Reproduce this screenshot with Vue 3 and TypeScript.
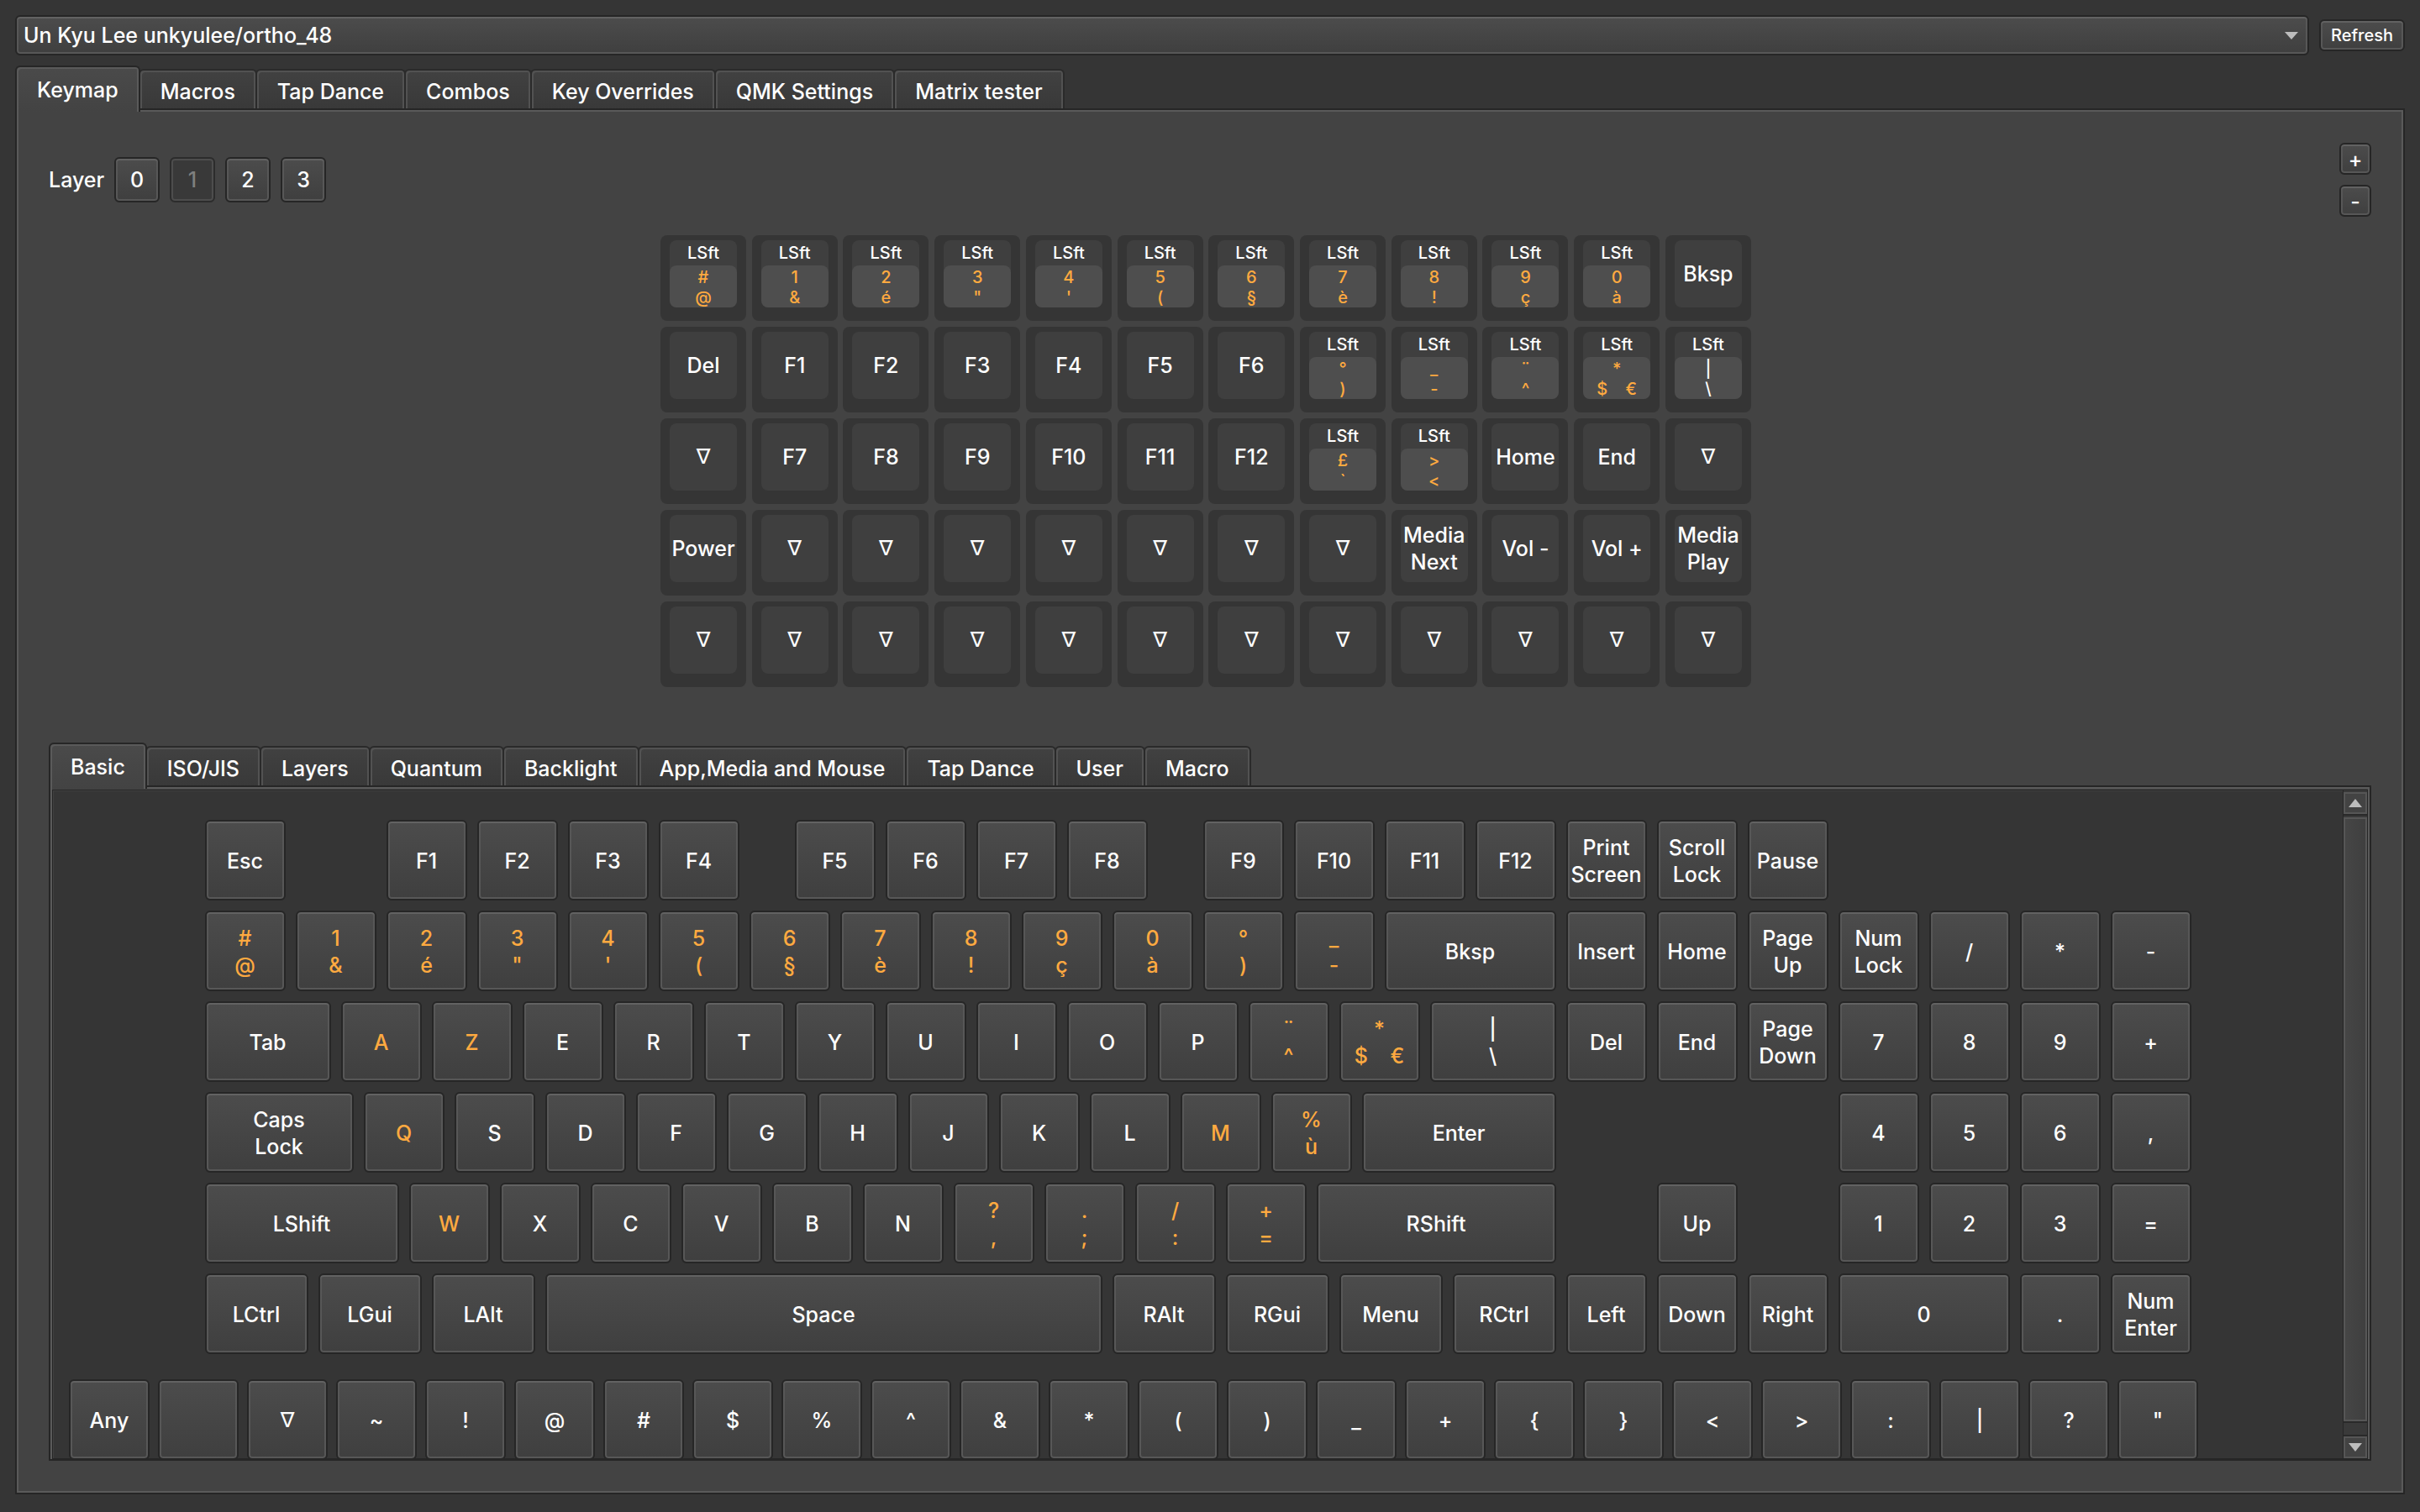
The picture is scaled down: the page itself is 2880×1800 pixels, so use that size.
<script setup lang="ts">
import { ref } from 'vue'

interface BoardKey {
  label: string
  mod?: string
  remapped?: boolean
}

interface PickerKey {
  label: string
  start: number
  span: number
  row: number
  remapped: boolean
}

type Entry = string | { gap: number } | { label: string; w: number }

const devices = ['Un Kyu Lee unkyulee/ortho_48']
const device = ref(devices[0])

const mainTabs = ['Keymap', 'Macros', 'Tap Dance', 'Combos', 'Key Overrides', 'QMK Settings', 'Matrix tester']
const mainTab = ref('Keymap')

const pickerTabs = ['Basic', 'ISO/JIS', 'Layers', 'Quantum', 'Backlight', 'App,Media and Mouse', 'Tap Dance', 'User', 'Macro']
const pickerTab = ref('Basic')

const layers = [0, 1, 2, 3]
const layer = ref(1)

const TRANSPARENT = '∇'

const plain = (...labels: string[]): BoardKey[] => labels.map((label) => ({ label }))
const shifted = (...labels: string[]): BoardKey[] =>
  labels.map((label) => ({ label, mod: 'LSft', remapped: label !== '|\n\\' }))

const board: BoardKey[][] = [
  [...shifted('#\n@', '1\n&', '2\né', '3\n"', "4\n'", '5\n(', '6\n§', '7\nè', '8\n!', '9\nç', '0\nà'), ...plain('Bksp')],
  [...plain('Del', 'F1', 'F2', 'F3', 'F4', 'F5', 'F6'), ...shifted('°\n)', '_\n-', '¨\n^', '*\n$    €', '|\n\\')],
  [...plain(TRANSPARENT, 'F7', 'F8', 'F9', 'F10', 'F11', 'F12'), ...shifted('£\n`', '>\n<'), ...plain('Home', 'End', TRANSPARENT)],
  plain('Power', ...Array<string>(7).fill(TRANSPARENT), 'Media\nNext', 'Vol -', 'Vol +', 'Media\nPlay'),
  plain(...Array<string>(12).fill(TRANSPARENT)),
]

const gap = (size: number): Entry => ({ gap: size })
const wide = (label: string, w: number): Entry => ({ label, w })

/* A leading "~" marks a key whose legend differs on the host layout. */
const pickerRows: Entry[][] = [
  ['Esc', gap(1), 'F1', 'F2', 'F3', 'F4', gap(0.5), 'F5', 'F6', 'F7', 'F8', gap(0.5), 'F9', 'F10', 'F11', 'F12',
    'Print\nScreen', 'Scroll\nLock', 'Pause'],
  ['~#\n@', '~1\n&', '~2\né', '~3\n"', "~4\n'", '~5\n(', '~6\n§', '~7\nè', '~8\n!', '~9\nç', '~0\nà', '~°\n)', '~_\n-',
    wide('Bksp', 2), 'Insert', 'Home', 'Page\nUp', 'Num\nLock', '/', '*', '-'],
  [wide('Tab', 1.5), '~A', '~Z', 'E', 'R', 'T', 'Y', 'U', 'I', 'O', 'P', '~¨\n^', '~*\n$    €', wide('|\n\\', 1.5),
    'Del', 'End', 'Page\nDown', '7', '8', '9', '+'],
  [wide('Caps\nLock', 1.75), '~Q', 'S', 'D', 'F', 'G', 'H', 'J', 'K', 'L', '~M', '~%\nù', wide('Enter', 2.25),
    gap(3), '4', '5', '6', ','],
  [wide('LShift', 2.25), '~W', 'X', 'C', 'V', 'B', 'N', '~?\n,', '~.\n;', '~/\n:', '~+\n=', wide('RShift', 2.75),
    gap(1), 'Up', gap(1), '1', '2', '3', '='],
  [wide('LCtrl', 1.25), wide('LGui', 1.25), wide('LAlt', 1.25), wide('Space', 6.25), wide('RAlt', 1.25), wide('RGui', 1.25),
    wide('Menu', 1.25), wide('RCtrl', 1.25), 'Left', 'Down', 'Right', wide('0', 2), '.', 'Num\nEnter'],
]

const pickerKeys: PickerKey[] = pickerRows.flatMap((entries, row) => {
  let x = 0
  const keys: PickerKey[] = []
  for (const entry of entries) {
    if (typeof entry !== 'string' && 'gap' in entry) {
      x += entry.gap
      continue
    }
    const raw = typeof entry === 'string' ? entry : entry.label
    const w = typeof entry === 'string' ? 1 : entry.w
    const remapped = raw.startsWith('~')
    keys.push({ label: remapped ? raw.slice(1) : raw, start: x * 4 + 1, span: w * 4, row: row + 1, remapped })
    x += w
  }
  return keys
})

const symbols = ['Any', '', TRANSPARENT, '~', '!', '@', '#', '$', '%', '^', '&', '*', '(', ')', '_', '+', '{', '}', '<', '>', ':', '|', '?', '"']
</script>

<template>
  <main class="app">
    <header class="device-bar">
      <div class="combo">
        <select v-model="device" class="raised combo-select" aria-label="Device">
          <option v-for="d in devices" :key="d" :value="d">{{ d }}</option>
        </select>
        <svg class="combo-arrow" viewBox="0 0 16 9" aria-hidden="true"><path d="M0 0h16L8 9z" /></svg>
      </div>
      <button type="button" class="raised refresh">Refresh</button>
    </header>

    <nav class="tabs" role="tablist">
      <button
        v-for="t in mainTabs"
        :key="t"
        type="button"
        role="tab"
        class="tab"
        :class="{ active: t === mainTab }"
        :aria-selected="t === mainTab"
        @click="mainTab = t"
      >{{ t }}</button>
    </nav>

    <section class="pane">
      <div class="toolbar">
        <div class="layers">
          <span class="layers-label">Layer</span>
          <button
            v-for="n in layers"
            :key="n"
            type="button"
            class="raised layer"
            :disabled="n === layer"
            @click="layer = n"
          >{{ n }}</button>
        </div>
        <div class="zoom">
          <button type="button" class="raised zoom-button">+</button>
          <button type="button" class="raised zoom-button">-</button>
        </div>
      </div>

      <div class="board-holder">
        <div class="board">
          <div v-for="(row, r) in board" :key="r" class="board-row">
            <button v-for="(key, c) in row" :key="c" type="button" class="cap">
              <span v-if="key.mod" class="face split">
                <span class="mod">{{ key.mod }}</span>
                <span class="inner" :class="{ remapped: key.remapped }">{{ key.label }}</span>
              </span>
              <span v-else class="face" :class="{ nabla: key.label === TRANSPARENT }">{{ key.label }}</span>
            </button>
          </div>
        </div>
      </div>

      <nav class="tabs" role="tablist">
        <button
          v-for="t in pickerTabs"
          :key="t"
          type="button"
          role="tab"
          class="tab"
          :class="{ active: t === pickerTab }"
          :aria-selected="t === pickerTab"
          @click="pickerTab = t"
        >{{ t }}</button>
      </nav>

      <section class="picker">
        <div class="scroll-area">
          <div class="viewport">
            <div class="full-board">
              <button
                v-for="(key, i) in pickerKeys"
                :key="i"
                type="button"
                class="raised key"
                :class="{ remapped: key.remapped }"
                :style="{ gridColumn: `${key.start} / span ${key.span}`, gridRow: key.row }"
              >{{ key.label }}</button>
            </div>
            <div class="symbols">
              <button
                v-for="s in symbols"
                :key="s"
                type="button"
                class="raised key"
                :class="{ nabla: s === TRANSPARENT }"
                :aria-label="s || 'None'"
              >{{ s }}</button>
            </div>
          </div>
          <div class="scrollbar">
            <button type="button" class="step" aria-label="Scroll up">
              <svg viewBox="0 0 16 10" aria-hidden="true"><path d="M0 10h16L8 0z" /></svg>
            </button>
            <div class="track"><div class="thumb"></div></div>
            <button type="button" class="step" aria-label="Scroll down">
              <svg viewBox="0 0 16 10" aria-hidden="true"><path d="M0 0h16L8 10z" /></svg>
            </button>
          </div>
        </div>
      </section>
    </section>
  </main>
</template>

<style>
body {
  background: #353535;
}
</style>

<style scoped>
.app {
  box-sizing: border-box;
  display: flex;
  flex-direction: column;
  height: 100vh;
  padding: 18px 18px 21px;
  background: #353535;
  color: #fff;
  font-family: Inter, 'Liberation Sans', sans-serif;
  font-size: 25px;
  font-weight: 500;
  line-height: 32px;
}

button,
select {
  box-sizing: border-box;
  margin: 0;
  padding: 0;
  color: inherit;
  font: inherit;
}

.raised {
  border: 2px solid #262626;
  border-radius: 6px;
  background: linear-gradient(#4c4c4c, #3f3f3f);
  box-shadow: inset 0 2px 0 #626262, inset 0 0 0 2px #575757;
}

.device-bar {
  display: flex;
  align-items: center;
  gap: 12px;
}

.combo {
  position: relative;
  flex: 1;
  height: 48px;
}

.combo-select {
  width: 100%;
  height: 48px;
  padding: 0 8px;
  appearance: none;
}

.combo-arrow {
  position: absolute;
  top: 20px;
  right: 13px;
  width: 16px;
  height: 9px;
  fill: #bdbdbd;
}

.refresh {
  width: 102px;
  height: 38px;
  font-size: 20px;
  line-height: 24px;
}

.tabs {
  display: flex;
  align-items: flex-end;
  height: 51px;
  margin-top: 12px;
}

.tab {
  height: 47px;
  margin-left: -2px;
  padding: 4px 24px 0;
  border: 2px solid #2a2a2a;
  border-bottom: 0;
  border-radius: 6px 6px 0 0;
  background: linear-gradient(#414141, #393939);
  box-shadow: inset 2px 2px 0 #525252, inset -2px 0 0 #525252;
}

.tab:first-child {
  margin-left: 0;
}

.tab.active {
  z-index: 1;
  align-self: flex-start;
  flex-shrink: 0;
  height: 55px;
  padding-top: 0;
  border-color: #262626;
  background: linear-gradient(#4a4a4a, #434343);
  box-shadow: inset 2px 2px 0 #5a5a5a, inset -2px 0 0 #5a5a5a;
}

.pane {
  display: flex;
  flex: 1;
  flex-direction: column;
  min-height: 0;
  padding: 39px 38px 38px;
  border: 2px solid #262626;
  background: #434343;
  box-shadow: inset 0 0 0 2px #5a5a5a;
}

.toolbar {
  display: flex;
  align-items: center;
  justify-content: space-between;
}

.layers {
  display: flex;
  align-items: center;
  gap: 12px;
}

.layers-label {
  width: 66px;
}

.layer {
  width: 54px;
  height: 54px;
}

.layer:disabled {
  border-color: #2c2c2c;
  background: #393939;
  box-shadow: inset 0 0 0 2px #4d4d4d;
  color: #7f7f7f;
}

.zoom {
  display: grid;
  gap: 12px;
}

.zoom-button {
  width: 38px;
  height: 38px;
  padding-top: 2px;
}

.board-holder {
  display: flex;
  justify-content: center;
  margin-top: 22px;
  padding: 0 10px 54px 0;
}

.board {
  display: flex;
  flex-direction: column;
  justify-content: space-between;
  width: 1298px;
  height: 538px;
}

.board-row {
  display: flex;
  justify-content: space-between;
}

.cap {
  display: flex;
  justify-content: center;
  width: 102px;
  height: 102px;
  padding-top: 6px;
  border: 0;
  border-radius: 8px;
  background: #353535;
  white-space: pre;
}

.face {
  display: flex;
  align-items: center;
  justify-content: center;
  width: 80px;
  height: 80px;
  border-radius: 8px;
  background: #3f3f3f;
}

.split {
  flex-direction: column;
  font-size: 20px;
  line-height: 24px;
}

.mod {
  height: 30px;
  line-height: 30px;
}

.inner {
  box-sizing: border-box;
  width: 80px;
  height: 50px;
  padding-top: 2px;
  border-radius: 8px;
  background: #4e4e4e;
}

.remapped {
  color: #ffaa40;
}

.nabla {
  font-family: 'DejaVu Sans', sans-serif;
}

.picker {
  display: flex;
  flex: 1;
  flex-direction: column;
  min-height: 0;
  padding: 3px 2px 0;
  border: 2px solid #262626;
  box-shadow: inset 2px 2px 0 #5a5a5a, inset -2px 0 0 #5a5a5a;
}

.scroll-area {
  display: flex;
  flex: 1;
  min-height: 0;
  border: 1px solid #262626;
  background: #353535;
  box-shadow: inset 1px 1px 0 #404040;
}

.viewport {
  flex: 1;
  min-width: 0;
  overflow: hidden;
  padding: 35px 19px 0;
}

.full-board {
  display: grid;
  grid-template-columns: repeat(88, 15px);
  grid-auto-rows: 96px;
  gap: 12px;
  justify-content: center;
}

.symbols {
  display: flex;
  gap: 10px;
  margin-top: 30px;
}

.key {
  min-width: 96px;
  height: 96px;
  padding-top: 2px;
  white-space: pre;
}

.scrollbar {
  display: flex;
  flex-direction: column;
  width: 28px;
  padding-top: 2px;
  border-left: 1px solid #262626;
}

.step {
  display: flex;
  align-items: center;
  justify-content: center;
  height: 26px;
  border: 2px solid #565656;
  background: #434343;
}

.step svg {
  width: 16px;
  height: 10px;
  fill: #bdbdbd;
}

.track {
  flex: 1;
  padding: 2px 0 16px;
  border: solid #2a2a2a;
  border-width: 2px 0;
  background: #3a3a3a;
}

.thumb {
  box-sizing: border-box;
  height: 100%;
  border: 2px solid #565656;
  background: linear-gradient(90deg, #464646, #3f3f3f);
  box-shadow: 0 2px 0 #2a2a2a;
}
</style>
